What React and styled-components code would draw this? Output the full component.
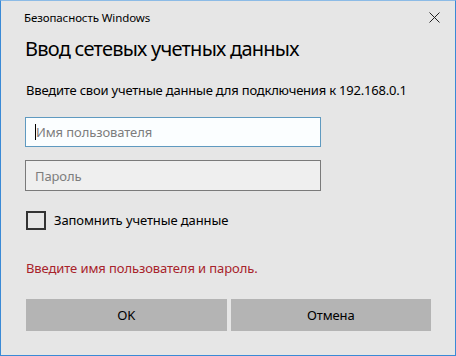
import React from "react";
import styled, { createGlobalStyle } from "styled-components";

const Global = createGlobalStyle`
  html, body { margin: 0; padding: 0; background: #e6e6e6; }
  * { box-sizing: border-box; }
`;

const Window = styled.div`
  width: 456px;
  height: 356px;
  background: #e6e6e6;
  border: 1px solid #3a8ad6;
  border-top-color: #8cbbe6;
  font-family: "Noto Sans", "Segoe UI", sans-serif;
  font-size: 13px;
  letter-spacing: -0.1px;
  color: #000;
  display: flex;
  flex-direction: column;
`;

const TitleBar = styled.div`
  height: 33px;
  display: flex;
  align-items: center;
  justify-content: space-between;
  padding-left: 23px;
  font-size: 11.5px;
  letter-spacing: -0.1px;
`;

const Close = styled.div`
  width: 46px;
  height: 33px;
  display: flex;
  align-items: center;
  justify-content: center;
  margin-right: -2px;
`;

const Body = styled.div`
  padding: 0 24px 0 24px;
  display: flex;
  flex-direction: column;
`;

const Heading = styled.div`
  font-size: 20px;
  line-height: 28px;
  margin-top: 1px;
  letter-spacing: -0.75px;
  white-space: nowrap;
`;

const Desc = styled.div`
  font-size: 13px;
  letter-spacing: -0.2px;
  line-height: 20px;
  margin-top: 17px;
  margin-left: 1px;
  white-space: nowrap;
`;

const Field = styled.div`
  width: 296px;
  height: ${(p) => (p.$focused ? 30 : 31)}px;
  margin-top: ${(p) => p.$mt}px;
  border: 1px solid ${(p) => (p.$focused ? "#5f9ac0" : "#7a7a7a")};
  background: ${(p) => (p.$focused ? "#fbfeff" : "#efefef")};
  display: flex;
  align-items: center;
  padding-left: 9px;
  color: #7d7d7d;
`;

const Caret = styled.span`
  display: inline-block;
  width: 1px;
  height: 16px;
  background: #000;
`;

const CheckRow = styled.div`
  display: flex;
  align-items: center;
  margin-top: 19px;
  margin-left: 1px;
  height: 20px;
`;

const Box = styled.div`
  width: 20px;
  height: 19px;
  border: 2px solid #333;
  margin-right: 8px;
`;

const Error = styled.div`
  color: #a8232b;
  line-height: 20px;
  margin-top: 28px;
  margin-left: 1px;
`;

const Buttons = styled.div`
  display: flex;
  gap: 4px;
  margin-top: 21px;
  margin-left: 1px;
`;

const Button = styled.div`
  width: 201px;
  height: 32px;
  background: #b4b4b4;
  display: flex;
  align-items: center;
  justify-content: center;
`;

export default function App() {
  return (
    <>
      <Global />
      <Window>
        <TitleBar>
          <span>Безопасность Windows</span>
          <Close>
            <svg width="11" height="11" viewBox="0 0 11 11">
              <path d="M0.5 0.5 L10.5 10.5 M10.5 0.5 L0.5 10.5" stroke="#222" strokeWidth="1" />
            </svg>
          </Close>
        </TitleBar>
        <Body>
          <Heading>Ввод сетевых учетных данных</Heading>
          <Desc>Введите свои учетные данные для подключения к 192.168.0.1</Desc>
          <Field $focused $mt={17}>
            <Caret />
            Имя пользователя
          </Field>
          <Field $mt={13}>Пароль</Field>
          <CheckRow>
            <Box />
            <span>Запомнить учетные данные</span>
          </CheckRow>
          <Error>Введите имя пользователя и пароль.</Error>
          <Buttons>
            <Button>OK</Button>
            <Button>Отмена</Button>
          </Buttons>
        </Body>
      </Window>
    </>
  );
}
